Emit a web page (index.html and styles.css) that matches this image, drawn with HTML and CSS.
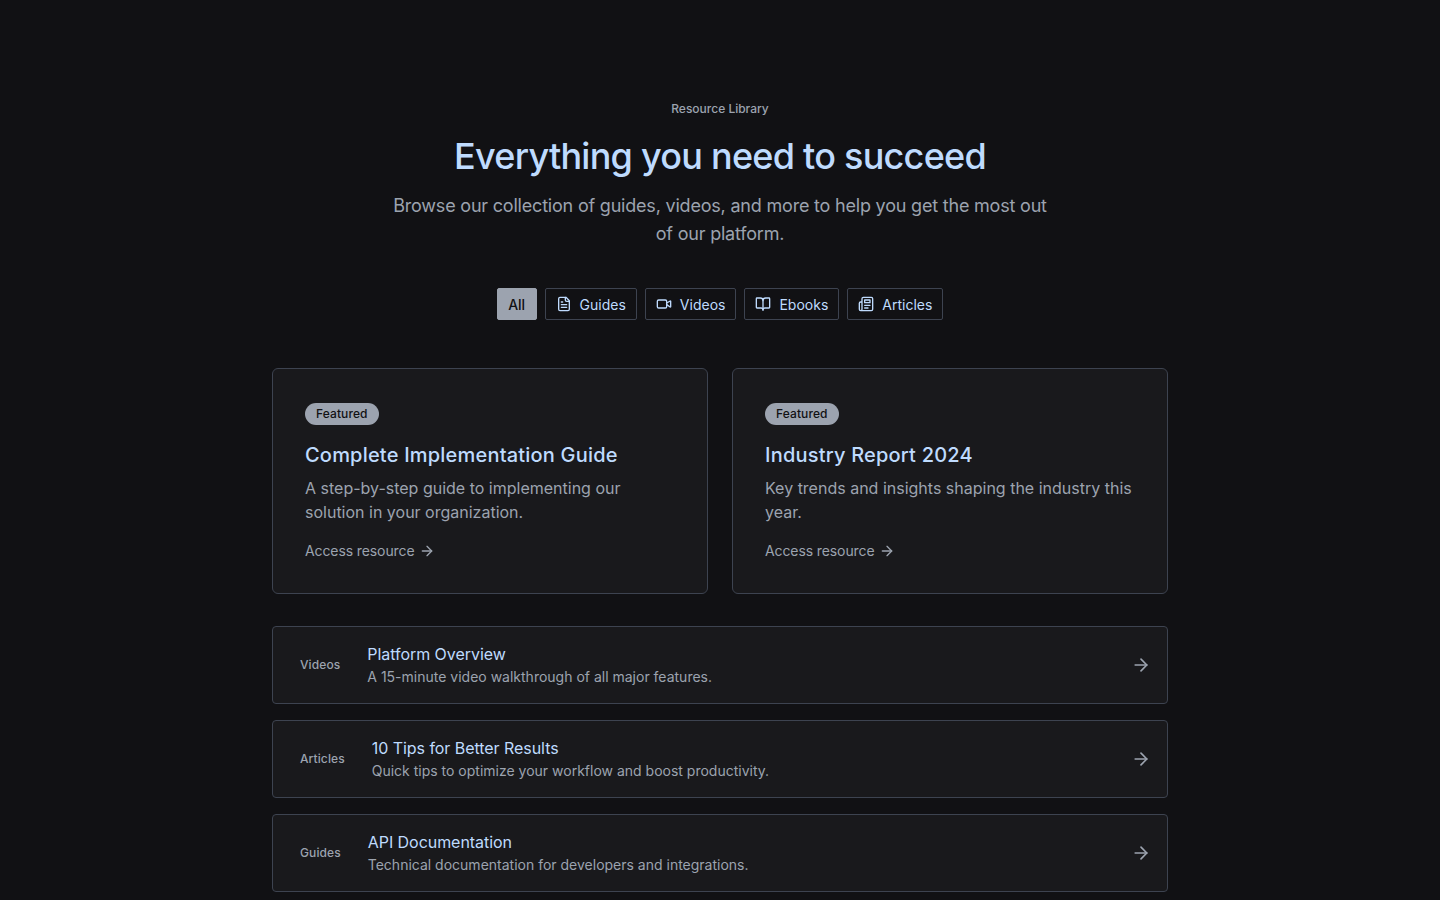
FILE: index.html
```html
<!DOCTYPE html>
<html lang="en">
<head>
    <meta charset="UTF-8">
    <meta name="viewport" content="width=device-width, initial-scale=1.0">
    <title>Resource Library</title>
    <link rel="stylesheet" href="styles.css">
</head>
<body>
    <main class="container">
        <header class="page-header">
            <p class="eyebrow">Resource Library</p>
            <h1>Everything you need to succeed</h1>
            <p class="intro">Browse our collection of guides, videos, and more to help you get the most out of our platform.</p>
        </header>

        <div class="filters">
            <button class="filter active">All</button>
            <button class="filter">
                <svg class="icon" viewBox="0 0 24 24"><path d="M15 2H6a2 2 0 0 0-2 2v16a2 2 0 0 0 2 2h12a2 2 0 0 0 2-2V7Z"/><path d="M14 2v4a2 2 0 0 0 2 2h4"/><path d="M10 9H8"/><path d="M16 13H8"/><path d="M16 17H8"/></svg>
                Guides
            </button>
            <button class="filter">
                <svg class="icon" viewBox="0 0 24 24"><path d="m16 13 5.223 3.482a.5.5 0 0 0 .777-.416V7.87a.5.5 0 0 0-.752-.432L16 10.5"/><rect x="2" y="6" width="14" height="12" rx="2"/></svg>
                Videos
            </button>
            <button class="filter">
                <svg class="icon" viewBox="0 0 24 24"><path d="M12 7v14"/><path d="M3 18a1 1 0 0 1-1-1V4a1 1 0 0 1 1-1h5a4 4 0 0 1 4 4 4 4 0 0 1 4-4h5a1 1 0 0 1 1 1v13a1 1 0 0 1-1 1h-6a3 3 0 0 0-3 3 3 3 0 0 0-3-3z"/></svg>
                Ebooks
            </button>
            <button class="filter">
                <svg class="icon" viewBox="0 0 24 24"><path d="M4 22h16a2 2 0 0 0 2-2V4a2 2 0 0 0-2-2H8a2 2 0 0 0-2 2v16a2 2 0 0 1-4 0V11a2 2 0 0 1 2-2h2"/><path d="M18 14h-8"/><path d="M15 18h-5"/><path d="M10 6h8v4h-8V6Z"/></svg>
                Articles
            </button>
        </div>

        <section class="featured">
            <article class="card">
                <span class="badge">Featured</span>
                <h3>Complete Implementation Guide</h3>
                <p>A step-by-step guide to implementing our solution in your organization.</p>
                <a class="card-link" href="#">Access resource
                    <svg class="icon" viewBox="0 0 24 24"><path d="M5 12h14"/><path d="m12 5 7 7-7 7"/></svg>
                </a>
            </article>
            <article class="card">
                <span class="badge">Featured</span>
                <h3>Industry Report 2024</h3>
                <p>Key trends and insights shaping the industry this year.</p>
                <a class="card-link" href="#">Access resource
                    <svg class="icon" viewBox="0 0 24 24"><path d="M5 12h14"/><path d="m12 5 7 7-7 7"/></svg>
                </a>
            </article>
        </section>

        <section class="resource-list">
            <a class="resource" href="#">
                <span class="resource-type">Videos</span>
                <div class="resource-body">
                    <h4>Platform Overview</h4>
                    <p>A 15-minute video walkthrough of all major features.</p>
                </div>
                <svg class="icon arrow" viewBox="0 0 24 24"><path d="M5 12h14"/><path d="m12 5 7 7-7 7"/></svg>
            </a>
            <a class="resource" href="#">
                <span class="resource-type">Articles</span>
                <div class="resource-body">
                    <h4>10 Tips for Better Results</h4>
                    <p>Quick tips to optimize your workflow and boost productivity.</p>
                </div>
                <svg class="icon arrow" viewBox="0 0 24 24"><path d="M5 12h14"/><path d="m12 5 7 7-7 7"/></svg>
            </a>
            <a class="resource" href="#">
                <span class="resource-type">Guides</span>
                <div class="resource-body">
                    <h4>API Documentation</h4>
                    <p>Technical documentation for developers and integrations.</p>
                </div>
                <svg class="icon arrow" viewBox="0 0 24 24"><path d="M5 12h14"/><path d="m12 5 7 7-7 7"/></svg>
            </a>
        </section>
    </main>
</body>
</html>
```

FILE: styles.css
```css
* {
    box-sizing: border-box;
}

body {
    margin: 0;
    background: #111114;
    color: #9ca3af;
    font-family: Inter, "Liberation Sans", sans-serif;
}

h1, h3, h4, p {
    margin: 0;
}

a {
    color: inherit;
    text-decoration: none;
}

.container {
    width: 896px;
    margin: 0 auto;
    padding: 101px 0 8px;
}

.page-header {
    text-align: center;
}

.eyebrow {
    font-size: 12px;
    line-height: 16px;
    font-weight: 500;
    margin-bottom: 19px;
}

h1 {
    font-size: 36px;
    line-height: 40px;
    font-weight: 500;
    letter-spacing: -0.75px;
    color: #bfdbfe;
}

.intro {
    width: 672px;
    margin: 16px auto 0;
    font-size: 18px;
    line-height: 28px;
    font-weight: 400;
    letter-spacing: -0.2px;
}

.filters {
    display: flex;
    justify-content: center;
    gap: 8px;
    margin-top: 40px;
}

.filter {
    display: flex;
    align-items: center;
    gap: 8px;
    height: 32px;
    padding: 0 10px;
    background: transparent;
    border: 1px solid #3d4350;
    border-radius: 2px;
    color: #bfdbfe;
    font-family: inherit;
    font-size: 14px;
    font-weight: 400;
}

.filter.active {
    padding: 0 10.5px;
    background: #9ca3af;
    border-color: #9ca3af;
    color: #111114;
    font-weight: 500;
}

.icon {
    width: 16px;
    height: 16px;
    fill: none;
    stroke: currentColor;
    stroke-width: 2;
    stroke-linecap: round;
    stroke-linejoin: round;
    flex-shrink: 0;
}

.featured {
    display: grid;
    grid-template-columns: 1fr 1fr;
    gap: 24px;
    margin-top: 48px;
}

.card {
    height: 226px;
    padding: 34px 32px 32px;
    background: #19191c;
    border: 1px solid #3d4350;
    border-radius: 6px;
}

.badge {
    display: block;
    width: fit-content;
    height: 22px;
    padding: 0 11px;
    border-radius: 11px;
    background: #9ca3af;
    color: #111114;
    font-size: 12px;
    line-height: 22px;
    font-weight: 500;
    letter-spacing: 0.1px;
}

.card h3 {
    margin-top: 16px;
    font-size: 20px;
    line-height: 28px;
    font-weight: 500;
    letter-spacing: 0.2px;
    color: #bfdbfe;
}

.card p {
    margin-top: 7px;
    font-size: 16px;
    line-height: 24px;
}

.card-link {
    display: flex;
    align-items: center;
    gap: 4px;
    margin-top: 17px;
    font-size: 14px;
    line-height: 20px;
    letter-spacing: -0.1px;
}

.resource-list {
    display: flex;
    flex-direction: column;
    gap: 16px;
    margin-top: 32px;
}

.resource {
    display: flex;
    align-items: center;
    gap: 27px;
    height: 78px;
    padding: 0 16px 0 27px;
    background: #19191c;
    border: 1px solid #3d4350;
    border-radius: 4px;
}

.resource-type {
    margin-bottom: 2px;
    font-size: 12px;
    font-weight: 500;
    letter-spacing: 0.1px;
}

.resource-body {
    flex: 1;
}

.resource-body h4 {
    margin-bottom: 2px;
    font-size: 16px;
    line-height: 22px;
    font-weight: 400;
    letter-spacing: -0.05px;
    color: #bfdbfe;
}

.resource-body p {
    font-size: 14px;
    line-height: 20px;
}

.arrow {
    width: 20px;
    height: 20px;
}
```
